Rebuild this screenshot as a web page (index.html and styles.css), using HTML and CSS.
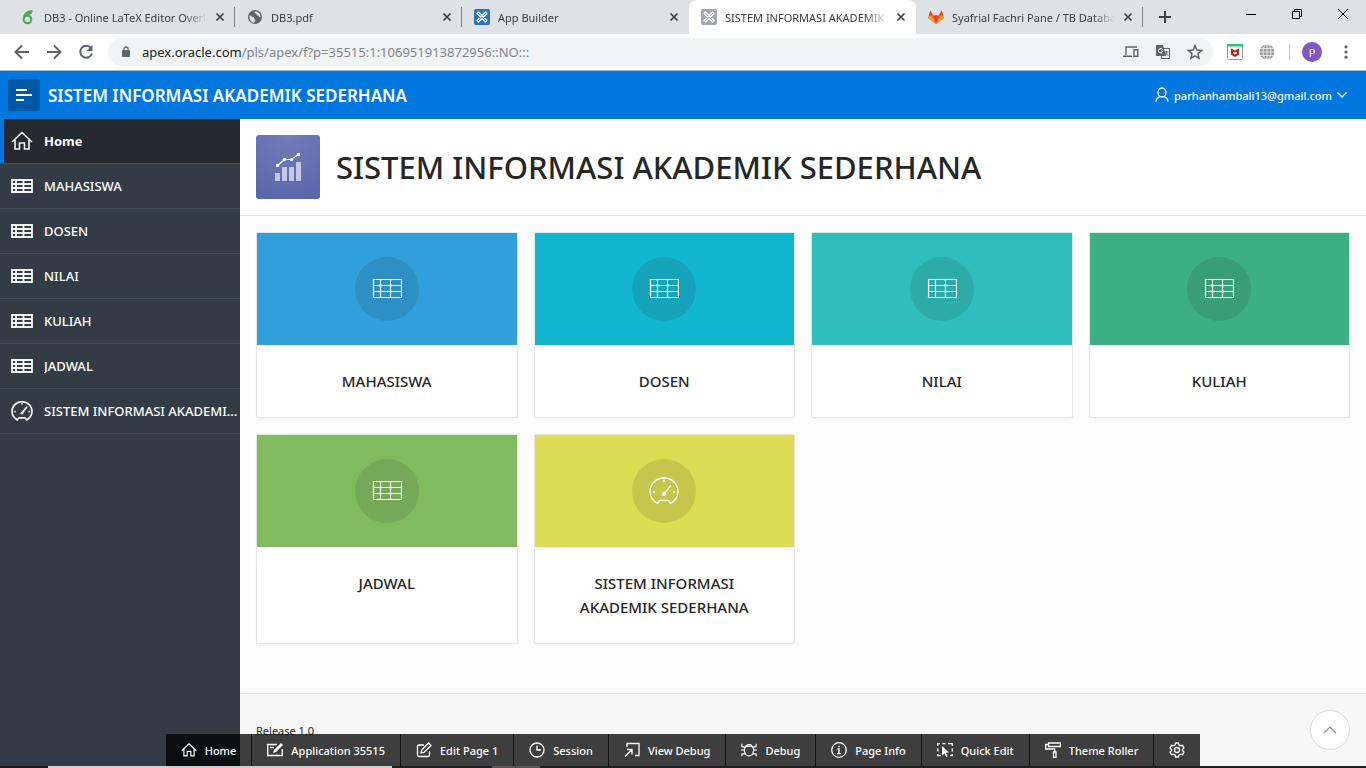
FILE: index.html
```
<!DOCTYPE html>
<html lang="id">
<head>
<meta charset="utf-8">
<title>SISTEM INFORMASI AKADEMIK SEDERHANA</title>
<link rel="stylesheet" href="styles.css">
</head>
<body>
<svg class="defs" aria-hidden="true">
  <symbol id="i-close" viewBox="0 0 16 16"><path d="M4.5 4.5l7 7M11.5 4.5l-7 7" stroke="currentColor" stroke-width="1.7" fill="none"/></symbol>
  <symbol id="i-apex" viewBox="0 0 16 16"><rect width="16" height="16" rx="2" fill="currentColor"/><path d="M3 4.5L4.500 3 13 11.500 11.500 13z M3 11.500L11.500 3 13 4.500 4.500 13z" fill="none" stroke="#fff" stroke-width="1.200" stroke-linejoin="round"/></symbol>
  <symbol id="i-home" viewBox="0 0 22 20"><path d="M1 11L11 1.500 21 11M4 9v9h4.500v-6h5v6H18V9" fill="none" stroke="currentColor" stroke-width="1.600"/></symbol>
  <symbol id="i-table" viewBox="0 0 22 14"><path d="M1 1h20v12H1zM1 5h20M1 9h20M5 1v12M12.500 1v12" fill="none" stroke="currentColor" stroke-width="1.800"/></symbol>
  <symbol id="i-grid" viewBox="0 0 30 20"><path d="M1.500 .5h28v18h-28zM1.500 6.500h28M1.500 12.500h28M8.500 .5v18M18.500 .5v18" fill="none" stroke="currentColor" stroke-width="1.200"/></symbol>
  <symbol id="i-gauge" viewBox="0 0 30 28"><path d="M8.500 26.500C4 24 1 20 1 14.500 1 7 7 1 15 1s14 6 14 13.500c0 5.500-3 9.500-7.500 12-1-2-1.500-3-2.500-3h-8c-1 0-1.500 1-2.500 3z" fill="none" stroke="currentColor" stroke-linejoin="round"/><path d="M15 17l7-9M14 4h2M4 15h2M24 15h2" fill="none" stroke="currentColor"/><circle cx="15" cy="17" r="2" fill="currentColor"/></symbol>
</svg>

<header class="browser">
  <div class="tabs">
    <div class="tab">
      <svg class="fav" viewBox="0 0 16 16" fill="none" stroke="#4aa84e" stroke-width="2"><circle cx="7.500" cy="10.500" r="3.800"/><path d="M4 9C4 5 7 2.500 12.500 2M6 5c3 .5 5-.5 6-3"/></svg>
      <span class="tab-title">DB3 - Online LaTeX Editor Overleaf</span>
      <button class="tab-close" aria-label="Close tab"><svg><use href="#i-close"/></svg></button>
    </div>
    <div class="tab">
      <svg class="fav" viewBox="0 0 16 16"><circle cx="8" cy="8" r="7" fill="#5f6368"/><path d="M2.500 6.500c2 0 2 1.500 3.500 1.500s1 2 2 2.500-.5 2.500-1 3.500c-3-.5-5-3-4.500-7.500zM8 2.500c-1 1.500 0 2 1 2s0 2 1.500 2S12 8.500 13.500 8.500C14 5.500 11.500 2 8 2.500z" fill="#dee1e6"/></svg>
      <span class="tab-title">DB3.pdf</span>
      <button class="tab-close" aria-label="Close tab"><svg><use href="#i-close"/></svg></button>
    </div>
    <div class="tab no-sep">
      <svg class="fav apex-blue"><use href="#i-apex"/></svg>
      <span class="tab-title">App Builder</span>
      <button class="tab-close" aria-label="Close tab"><svg><use href="#i-close"/></svg></button>
    </div>
    <div class="tab active no-sep">
      <svg class="fav apex-grey"><use href="#i-apex"/></svg>
      <span class="tab-title">SISTEM INFORMASI AKADEMIK SEDERHANA</span>
      <button class="tab-close" aria-label="Close tab"><svg><use href="#i-close"/></svg></button>
    </div>
    <div class="tab">
      <svg class="fav" viewBox="0 0 16 16"><path d="M0 9l2.500-7.500L5 6.500h6l2.500-5L16 9l-8 6z" fill="#fc6d26"/><path d="M5 6.500h6L8 15z" fill="#e24329"/><path d="M0 9l2.500-2.500L8 15zM16 9l-2.500-2.500L8 15z" fill="#fca326"/><path d="M2.500 1.500L5 6.500H.8zM13.500 1.500L11 6.500h4.200z" fill="#e24329"/></svg>
      <span class="tab-title">Syafrial Fachri Pane / TB Database</span>
      <button class="tab-close" aria-label="Close tab"><svg><use href="#i-close"/></svg></button>
    </div>
    <button class="new-tab" aria-label="New tab"><svg width="14" height="14" viewBox="0 0 14 14" stroke="#3c4043" stroke-width="2"><path d="M7 1v12M1 7h12"/></svg></button>
    <div class="win">
      <button aria-label="Minimize"><svg width="12" height="12" viewBox="0 0 12 12" fill="none" stroke="#000"><path d="M1 6.500h10"/></svg></button>
      <button aria-label="Restore"><svg width="12" height="12" viewBox="0 0 12 12" fill="none" stroke="#000"><path d="M1.500 3.500h7v7h-7zM3.500 3.500v-2h7v7h-2"/></svg></button>
      <button aria-label="Close"><svg width="12" height="12" viewBox="0 0 12 12" fill="none" stroke="#000"><path d="M1 1l10 10M11 1L1 11"/></svg></button>
    </div>
  </div>
  <div class="addressbar">
    <div class="nav">
      <button aria-label="Back"><svg viewBox="0 0 16 16"><path d="M15 8H2M8 1.500L1.500 8 8 14.500"/></svg></button>
      <button aria-label="Forward"><svg viewBox="0 0 16 16"><path d="M1 8h13M8 1.500L14.500 8 8 14.500"/></svg></button>
      <button aria-label="Reload"><svg viewBox="0 0 16 16"><path d="M13 4A6 6 0 1 0 14 9.500"/><path d="M14.500 1v6h-6z" fill="#5f6368" stroke="none"/></svg></button>
    </div>
    <div class="omnibox">
      <svg class="lock" width="10" height="12" viewBox="0 0 10 12"><rect x="1" y="4" width="8" height="7" rx="1" fill="#5f6368"/><path d="M3 5V3a2 2 0 0 1 4 0v2" fill="none" stroke="#5f6368" stroke-width="1.300"/></svg>
      <span class="url"><b>apex.oracle.com</b>/pls/apex/f?p=35515:1:106951913872956::NO:::</span>
      <button aria-label="Send to your devices"><svg viewBox="0 0 16 16" fill="none" stroke="#5f6368" stroke-width="1.400"><path d="M14 3H3v8M0 12.300h9"/><path d="M11 5.700h3.800v6.600H11z"/></svg></button>
      <button aria-label="Translate this page"><svg viewBox="0 0 16 16"><rect x="6.500" y="4.500" width="8" height="10" fill="#f1f3f4" stroke="#5f6368"/><path d="M1 1h7l3 11H1z" fill="#5f6368"/><path d="M7.500 5.500A2.200 2.200 0 1 0 7.500 8V7H6" fill="none" stroke="#fff"/><path d="M9.500 8h4M11.500 7v1c0 2-1 3-1.500 3.500M10.500 9l3 3" fill="none" stroke="#5f6368"/></svg></button>
      <button aria-label="Bookmark this tab"><svg viewBox="0 0 16 16" fill="none" stroke="#5f6368" stroke-width="1.500"><path d="M8 1.800l1.800 4.300 4.700.4-3.500 3.100 1 4.600L8 11.800l-4 2.400 1-4.600L1.500 6.500l4.700-.4z"/></svg></button>
    </div>
    <div class="extensions">
      <button aria-label="McAfee WebAdvisor"><svg viewBox="0 0 16 16"><rect x=".5" y=".5" width="15" height="15" rx="1" fill="#fff" stroke="#9a9a9a"/><path d="M0 0h16v2.500H0z" fill="#1fc978"/><path d="M4 4.500l4 2 4-2v6l-4 2.500-4-2.500z" fill="#c01818"/><path d="M6 7.500v2l2 1 2-1v-2l-2 1z" fill="#fff"/></svg></button>
      <button aria-label="Web extension"><svg viewBox="0 0 16 16" fill="none" stroke="#fff" stroke-width=".7"><circle cx="8" cy="8" r="7.500" fill="#9b9b9b" stroke="none"/><path d="M0 4.500h16M0 11.500h16M8 0v16M0 8h16"/><ellipse cx="8" cy="8" rx="4" ry="7.500"/></svg></button>
      <i class="ext-sep"></i>
      <button class="avatar" aria-label="Profile">P</button>
      <button aria-label="Menu"><svg viewBox="0 0 16 16" fill="#5f6368"><circle cx="8" cy="2.800" r="1.600"/><circle cx="8" cy="8" r="1.600"/><circle cx="8" cy="13.200" r="1.600"/></svg></button>
    </div>
  </div>
</header>

<div class="app">
  <header class="app-header">
    <button class="menu-toggle" aria-label="Toggle navigation"><svg width="16" height="14" viewBox="0 0 16 14" stroke="#fff" stroke-width="2"><path d="M0 2h11M0 7h16M0 12h8"/></svg></button>
    <a class="logo" href="#">SISTEM INFORMASI AKADEMIK SEDERHANA</a>
    <button class="user">
      <svg width="14" height="16" viewBox="0 0 14 16" fill="none" stroke="#fff" stroke-width="1.300"><ellipse cx="7" cy="5.500" rx="4" ry="4.500"/><path d="M5 9.500C3 10.500 1 11 1 14.500M9 9.500c2 1 4 1.500 4 5"/></svg>
      <span>parhanhambali13@gmail.com</span>
      <svg width="10" height="8" viewBox="0 0 10 8" fill="none" stroke="#fff" stroke-width="1.300"><path d="M.5 1.500L5 6l4.500-4.500"/></svg>
    </button>
  </header>
  <div class="app-body">
    <nav class="sidebar">
      <a class="side-item current" href="#"><svg class="side-icon"><use href="#i-home"/></svg><span>Home</span></a>
      <a class="side-item" href="#"><svg class="side-icon"><use href="#i-table"/></svg><span>MAHASISWA</span></a>
      <a class="side-item" href="#"><svg class="side-icon"><use href="#i-table"/></svg><span>DOSEN</span></a>
      <a class="side-item" href="#"><svg class="side-icon"><use href="#i-table"/></svg><span>NILAI</span></a>
      <a class="side-item" href="#"><svg class="side-icon"><use href="#i-table"/></svg><span>KULIAH</span></a>
      <a class="side-item" href="#"><svg class="side-icon"><use href="#i-table"/></svg><span>JADWAL</span></a>
      <a class="side-item" href="#"><svg class="side-icon gauge"><use href="#i-gauge"/></svg><span>SISTEM INFORMASI AKADEMIK SEDERHANA</span></a>
    </nav>
    <main class="main">
      <div class="hero">
        <div class="hero-icon"><svg width="28" height="30" viewBox="0 0 28 30"><path d="M1 21h5v8H1zM8 15h5v14H8zM15 15h5v14h-5zM22 10h5v19h-5z" fill="#c5c8e3"/><path d="M3.500 13.500l7-6h7l7-5" fill="none" stroke="#fff" stroke-width="1.200"/><g fill="#fff"><circle cx="3.500" cy="13.500" r="1.700"/><circle cx="10.500" cy="7.500" r="1.700"/><circle cx="17.500" cy="7.500" r="1.700"/><circle cx="24.500" cy="2.500" r="1.700"/></g></svg></div>
        <h1>SISTEM INFORMASI AKADEMIK SEDERHANA</h1>
      </div>
      <div class="cards">
        <a class="card" href="#"><div class="card-top blue"><div class="disc"><svg class="grid-icon"><use href="#i-grid"/></svg></div></div><h2>MAHASISWA</h2></a>
        <a class="card" href="#"><div class="card-top cyan"><div class="disc"><svg class="grid-icon"><use href="#i-grid"/></svg></div></div><h2>DOSEN</h2></a>
        <a class="card" href="#"><div class="card-top teal"><div class="disc"><svg class="grid-icon"><use href="#i-grid"/></svg></div></div><h2>NILAI</h2></a>
        <a class="card" href="#"><div class="card-top green"><div class="disc"><svg class="grid-icon"><use href="#i-grid"/></svg></div></div><h2>KULIAH</h2></a>
        <a class="card" href="#"><div class="card-top lime"><div class="disc"><svg class="grid-icon"><use href="#i-grid"/></svg></div></div><h2>JADWAL</h2></a>
        <a class="card" href="#"><div class="card-top yellow"><div class="disc"><svg class="gauge-icon"><use href="#i-gauge"/></svg></div></div><h2>SISTEM INFORMASI AKADEMIK SEDERHANA</h2></a>
      </div>
      <footer class="footer">
        <span>Release 1.0</span>
        <button class="to-top" aria-label="Start of page"><svg width="14" height="8" viewBox="0 0 14 8" fill="none" stroke="#8a8a8a" stroke-width="1.200"><path d="M1 7l6-6 6 6"/></svg></button>
      </footer>
    </main>
  </div>
  <div class="devbar">
    <div class="devbar-inner">
      <button><svg viewBox="0 0 22 20"><use href="#i-home"/></svg>Home</button>
      <button><svg viewBox="0 0 16 16"><path d="M10 2.500H.7v11h14.600V7M3 5.500h4"/><path d="M6 11l1-3 7-7 2 2-7 7z" fill="currentColor" stroke="none"/></svg>Application 35515</button>
      <button><svg viewBox="0 0 16 16"><path d="M8 3H3Q1.500 3 1.500 4.500v8.500Q1.500 14.500 3 14.500h9q1.500 0 1.500-1.500V9M5 11l.7-3L12.500 1 15 3.500 8 10.300z"/></svg>Edit Page 1</button>
      <button><svg viewBox="0 0 16 16"><circle cx="8" cy="8" r="7"/><path d="M8 3.500V8h4"/></svg>Session</button>
      <button><svg viewBox="0 0 16 16"><path d="M3 5V1.500h12v12h-4M1 14.500l7-7M3 7.500h5v5"/></svg>View Debug</button>
      <button><svg viewBox="0 0 18 16"><path d="M5 4h8l1.500 4L13 13l-4 2-4-2-1.500-5zM6 4q0-2 3-2t3 2M1 1v3l3.500 1M17 1v3l-3.500 1M0 8h3.500M18 8h-3.500M1 15v-2.500L4.500 12M17 15v-2.500l-3.500-.5"/></svg>Debug</button>
      <button><svg viewBox="0 0 16 16"><circle cx="8" cy="8" r="7.300"/><path d="M6.500 7H8v4.500M6 11.700h4M8 3.800v1.400"/></svg>Page Info</button>
      <button><svg viewBox="0 0 16 16"><path d="M.7 4V1.700H3M5.500 1.700h3M11 1.700h4.300V4M15.300 6.500v3M15.300 12v1.500H13M.7 6.500v3M.7 12v1.500H4"/><path d="M5 4l7 6.500-3 .3 1.700 3.700-1.500.7L7.500 11.500 5 13.500z" fill="currentColor" stroke="none"/></svg>Quick Edit</button>
      <button><svg viewBox="0 0 16 16"><path d="M3.500 1h12v3.500h-12zM3.500 2.500H.7v4.500h9v3M8.500 10h2.500v5.300H8.500z"/></svg>Theme Roller</button>
      <button aria-label="Options"><svg viewBox="0 0 16 16"><circle cx="8" cy="8" r="2.500"/><path d="M6.500 1h3l.5 2 1.500.9 2-.6 1.500 2.600L13.500 7.300v1.400l1.500 1.400-1.500 2.600-2-.6-1.500.9-.5 2h-3L6 13l-1.500-.9-2 .6L1 10.100l1.500-1.400V7.300L1 5.900l1.500-2.600 2 .6L6 3z"/></svg></button>
    </div>
  </div>
</div>
<div class="taskbar"><i class="t1"></i><i class="t2"></i><i class="t3"></i><i class="t4"></i></div>
</body>
</html>
```
FILE: styles.css
```
* { box-sizing: border-box; }

body {
  margin: 0;
  height: 100vh;
  display: flex;
  flex-direction: column;
  overflow: hidden;
  font-family: "Noto Sans", "Open Sans", sans-serif;
  font-size: 11px;
  color: #262626;
}

button {
  border: 0;
  padding: 0;
  background: none;
  font: inherit;
  color: inherit;
  display: flex;
  align-items: center;
  justify-content: center;
}

a { color: inherit; text-decoration: none; }
svg { flex: none; display: block; }
.defs { display: none; }

/* Browser frame */
.browser { flex: none; border-bottom: 1px solid #b4b6b8; }

.tabs {
  height: 34px;
  display: flex;
  background: #dee1e6;
  padding-left: 8px;
}

.tab {
  flex: 0 1 227px;
  min-width: 0;
  display: flex;
  align-items: center;
  gap: 8px;
  padding: 0 7px 0 12px;
  color: #3c4043;
  background: linear-gradient(#80868b, #80868b) right center / 1px 20px no-repeat;
}
.tab.no-sep { background: none; }
.tab.active { background: #fff; border-radius: 8px 8px 0 0; }

.fav { width: 16px; height: 16px; }
.apex-blue { color: #2673bf; }
.apex-grey { color: #a4a8ac; }

.tab-title {
  flex: 1;
  margin-right: -4px;
  overflow: hidden;
  white-space: nowrap;
  mask-image: linear-gradient(to right, #000 calc(100% - 24px), transparent);
}
.tab-close { width: 16px; height: 16px; }
.tab-close svg { width: 16px; height: 16px; }
.new-tab { width: 28px; margin-left: 8px; }

.win { margin-left: auto; display: flex; height: 28px; }
.win button { width: 46px; }

.addressbar {
  height: 36px;
  display: flex;
  align-items: center;
  background: #fff;
  padding: 0 12px 0 14px;
}
.nav { display: flex; gap: 16px; padding-right: 14px; }
.nav svg {
  width: 16px;
  height: 16px;
  fill: none;
  stroke: #5f6368;
  stroke-width: 2;
}

.omnibox {
  flex: 1;
  height: 28px;
  display: flex;
  align-items: center;
  gap: 16px;
  padding: 0 10px 0 13px;
  border-radius: 14px;
  background: #f1f3f4;
}
.omnibox button svg, .extensions button svg { width: 16px; height: 16px; }
.lock { margin-right: -5px; }
.url { flex: 1; font-size: 13px; color: #80868b; white-space: nowrap; overflow: hidden; }
.url b { font-weight: 400; color: #202124; }

.extensions { display: flex; align-items: center; padding-left: 14px; gap: 16px; }
.ext-sep { width: 1px; height: 16px; background: #c8cacd; margin: 0 -4px 0 -2px; }
.avatar {
  width: 20px;
  height: 20px;
  border-radius: 50%;
  background: #7e57c2;
  color: #fff;
}

/* Application shell */
.app {
  flex: 1;
  min-height: 0;
  display: flex;
  flex-direction: column;
  position: relative;
}

.app-header {
  flex: none;
  height: 48px;
  display: flex;
  align-items: center;
  gap: 8px;
  padding: 0 19px 0 8px;
  background: #0076df;
  color: #fff;
}
.menu-toggle { width: 32px; height: 32px; border-radius: 2px; background: #0059a8; }
.logo { font-size: 17px; font-weight: 600; }
.user { margin-left: auto; gap: 5px; font-weight: 500; }

.app-body { flex: 1; min-height: 0; display: flex; }

.sidebar { flex: none; width: 240px; background: #333c44; color: #fff; }
.side-item {
  height: 45px;
  display: flex;
  align-items: center;
  gap: 11px;
  padding-left: 11px;
  border-bottom: 1px solid #434d56;
  font-size: 13px;
  font-weight: 500;
}
.side-item span {
  flex: 1;
  overflow: hidden;
  white-space: nowrap;
  text-overflow: ellipsis;
}
.side-item.current {
  background: #242a30;
  box-shadow: inset 4px 0 #0076df;
  font-weight: 700;
}
.side-icon { width: 22px; height: 20px; color: #f4f5f5; }
.gauge { stroke-width: 2.4; }

.main {
  flex: 1;
  min-width: 0;
  display: flex;
  flex-direction: column;
  background: #fcfcfc;
}
.hero {
  flex: none;
  display: flex;
  align-items: center;
  gap: 16px;
  padding: 16px;
  background: #fff;
  border-bottom: 1px solid #e2e2e2;
}
.hero-icon {
  width: 64px;
  height: 64px;
  border-radius: 3px;
  display: flex;
  align-items: center;
  justify-content: center;
  background: radial-gradient(circle at 50% 0, #727db9, #5865ab);
}
h1 { margin: 0; font-size: 31px; line-height: 40px; font-weight: 500; }

.cards {
  flex: 1;
  display: grid;
  grid-template-columns: repeat(4, minmax(0, 1fr));
  align-content: start;
  gap: 16px;
  padding: 16px;
}
.card {
  border: 1px solid #e6e6e6;
  border-radius: 2px;
  background: #fff;
  box-shadow: 0 2px 4px -2px rgba(0, 0, 0, .08);
}
.card-top {
  height: 112px;
  display: flex;
  align-items: center;
  justify-content: center;
}
.card h2 {
  margin: 0;
  padding: 24px;
  font-size: 15px;
  line-height: 24px;
  font-weight: 500;
  text-align: center;
}
.disc {
  width: 64px;
  height: 64px;
  border-radius: 50%;
  display: flex;
  align-items: center;
  justify-content: center;
  background: rgba(32, 32, 32, .12);
  color: #fff;
}
.grid-icon { width: 30px; height: 20px; }
.gauge-icon { width: 30px; height: 28px; stroke-width: 1.3; }

.blue { background: #309fdb; }
.cyan { background: #13b6cf; }
.teal { background: #2ebfbc; }
.green { background: #3caf85; }
.lime { background: #81bb5f; }
.yellow { background: #dddd53; }

.footer {
  flex: none;
  display: flex;
  align-items: center;
  justify-content: space-between;
  padding: 16px;
  border-top: 1px solid #e6e6e6;
  background: #f7f7f7;
}
.to-top {
  width: 40px;
  height: 40px;
  border: 1px solid #dcdcdc;
  border-radius: 50%;
  background: #fff;
}

/* Developer toolbar floats over the page bottom */
.devbar {
  position: absolute;
  left: 0;
  right: 0;
  bottom: 0;
  display: flex;
  justify-content: center;
  pointer-events: none;
}
.devbar-inner { display: flex; background: rgba(0, 0, 0, .75); pointer-events: auto; }
.devbar button {
  height: 32px;
  gap: 8px;
  padding: 0 15px;
  font-weight: 500;
  color: #fff;
  white-space: nowrap;
}
.devbar button + button { border-left: 1px solid #111; }
.devbar svg {
  width: 16px;
  height: 16px;
  fill: none;
  stroke: currentColor;
  stroke-width: 1.3;
}

/* Visible sliver of the desktop taskbar */
.taskbar { flex: none; height: 2px; display: flex; background: #202020; }
.t1 { flex: 48; background: #1b1b1b; }
.t2 { flex: 344; background: #d0d0d0; }
.t3 { flex: 100; background: #202020; }
.t4 { flex: 48; margin-right: 60.5%; background: #555; }
```
